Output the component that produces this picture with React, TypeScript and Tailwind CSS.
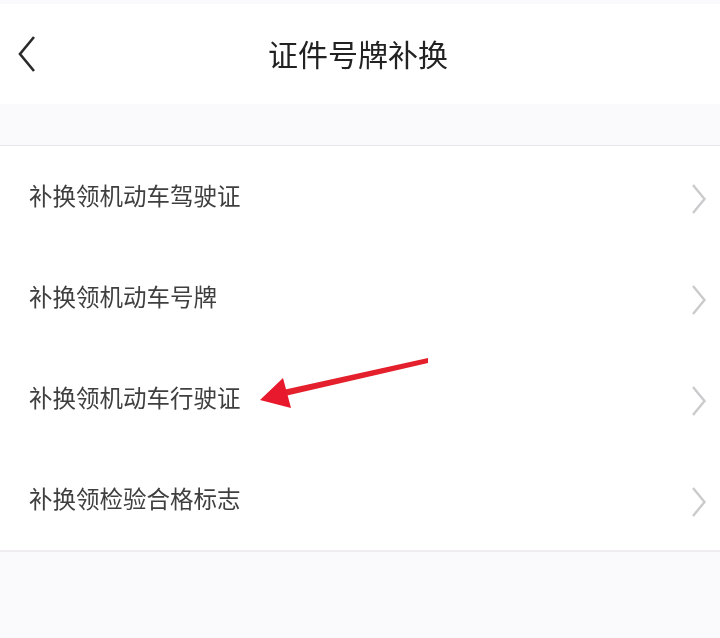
import React from 'react';

const rows = ['补换领机动车驾驶证', '补换领机动车号牌', '补换领机动车行驶证', '补换领检验合格标志'];

const Chevron = () => (
  <svg width="18" height="34" viewBox="0 0 18 34" fill="none" className="mr-[12px] mt-[4px]">
    <path d="M3 3 L14.5 17 L3 31" stroke="#cbcbcd" strokeWidth="2.4" />
  </svg>
);

export default function App() {
  return (
    <div
      className="relative h-[638px] w-[720px] overflow-hidden bg-[#faf9fb] pt-[4px] blur-[0.4px]"
      style={{ fontFamily: '"Noto Sans CJK SC", sans-serif' }}
    >
      <div className="flex h-[100px] items-center gap-[232px] bg-white pl-[16px]">
        <svg width="20" height="38" viewBox="0 0 20 38" fill="none">
          <path d="M18 2 L4 19 L18 36" stroke="#2a2a2a" strokeWidth="2.6" />
        </svg>
        <div className="pb-[3px] text-[30px] leading-none text-[#222222]">证件号牌补换</div>
      </div>

      <div className="mt-[41px] border-t border-t-[#e8e6ea] border-b-2 border-b-[#efedf0] bg-white">
        {rows.map((label) => (
          <div key={label} className="flex h-[101px] items-center justify-between pl-[29px]">
            <span className="pb-[2px] text-[23.5px] leading-none text-[#3f3f3f]">{label}</span>
            <Chevron />
          </div>
        ))}
      </div>

      {/* red annotation arrow over the list */}
      <svg width="180" height="60" viewBox="0 0 180 60" fill="none" className="absolute left-[255px] top-[350px]">
        <path d="M173 8 L173 13 L30 46 L28 40 Z" fill="#e3202c" />
        <path d="M5 50 L28 28 L36 58 Z" fill="#e8192c" />
      </svg>
    </div>
  );
}
